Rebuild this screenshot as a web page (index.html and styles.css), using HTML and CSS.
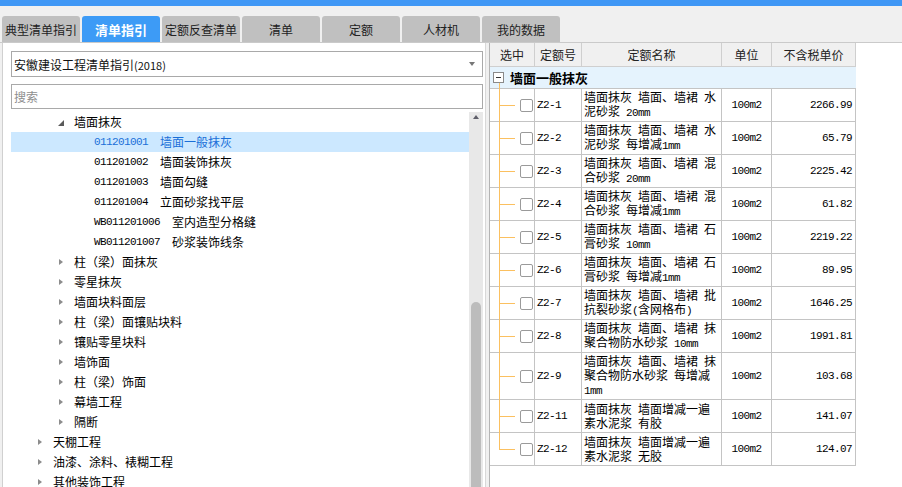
FILE: index.html
```html
<!DOCTYPE html>
<html lang="zh-CN">
<head>
<meta charset="utf-8">
<title>清单指引</title>
<link rel="stylesheet" href="styles.css">
</head>
<body>
<div class="topbar"></div>
<nav class="tabs">
  <div class="tab">典型清单指引</div>
  <div class="tab active">清单指引</div>
  <div class="tab">定额反查清单</div>
  <div class="tab">清单</div>
  <div class="tab">定额</div>
  <div class="tab">人材机</div>
  <div class="tab">我的数据</div>
</nav>
<div class="main">
  <section class="left">
    <div class="select"><span>安徽建设工程清单指引<span class="small">(2018)</span></span><i class="caret"></i></div>
    <div class="search">搜索</div>
    <div class="tree">
      <ul class="tree-list">
        <li class="node l2"><i class="tg open"></i>墙面抹灰</li>
        <li class="node l3 sel"><span class="code">011201001</span>墙面一般抹灰</li>
        <li class="node l3"><span class="code">011201002</span>墙面装饰抹灰</li>
        <li class="node l3"><span class="code">011201003</span>墙面勾缝</li>
        <li class="node l3"><span class="code">011201004</span>立面砂浆找平层</li>
        <li class="node l3"><span class="code">WB011201006</span>室内造型分格缝</li>
        <li class="node l3"><span class="code">WB011201007</span>砂浆装饰线条</li>
        <li class="node l2"><i class="tg closed"></i>柱（梁）面抹灰</li>
        <li class="node l2"><i class="tg closed"></i>零星抹灰</li>
        <li class="node l2"><i class="tg closed"></i>墙面块料面层</li>
        <li class="node l2"><i class="tg closed"></i>柱（梁）面镶贴块料</li>
        <li class="node l2"><i class="tg closed"></i>镶贴零星块料</li>
        <li class="node l2"><i class="tg closed"></i>墙饰面</li>
        <li class="node l2"><i class="tg closed"></i>柱（梁）饰面</li>
        <li class="node l2"><i class="tg closed"></i>幕墙工程</li>
        <li class="node l2"><i class="tg closed"></i>隔断</li>
        <li class="node l1"><i class="tg closed"></i>天棚工程</li>
        <li class="node l1"><i class="tg closed"></i>油漆、涂料、裱糊工程</li>
        <li class="node l1"><i class="tg closed"></i>其他装饰工程</li>
      </ul>
      <div class="vscroll"><i class="up"></i><i class="thumb"></i></div>
    </div>
  </section>
  <section class="right">
    <div class="grid">
      <div class="hd">选中</div>
      <div class="hd">定额号</div>
      <div class="hd">定额名称</div>
      <div class="hd">单位</div>
      <div class="hd">不含税单价</div>

      <div class="group"><i class="minus"></i>墙面一般抹灰</div>

      <div class="c sel-c"><i class="cb"></i></div><div class="c code-c m">Z2-1</div><div class="c name"><p>墙面抹灰&ensp;墙面、墙裙&ensp;水<br>泥砂浆&ensp;<span class="m">20mm</span></p></div><div class="c unit m">100m2</div><div class="c price m">2266.99</div>
      <div class="c sel-c"><i class="cb"></i></div><div class="c code-c m">Z2-2</div><div class="c name"><p>墙面抹灰&ensp;墙面、墙裙&ensp;水<br>泥砂浆&ensp;每增减<span class="m">1mm</span></p></div><div class="c unit m">100m2</div><div class="c price m">65.79</div>
      <div class="c sel-c"><i class="cb"></i></div><div class="c code-c m">Z2-3</div><div class="c name"><p>墙面抹灰&ensp;墙面、墙裙&ensp;混<br>合砂浆&ensp;<span class="m">20mm</span></p></div><div class="c unit m">100m2</div><div class="c price m">2225.42</div>
      <div class="c sel-c"><i class="cb"></i></div><div class="c code-c m">Z2-4</div><div class="c name"><p>墙面抹灰&ensp;墙面、墙裙&ensp;混<br>合砂浆&ensp;每增减<span class="m">1mm</span></p></div><div class="c unit m">100m2</div><div class="c price m">61.82</div>
      <div class="c sel-c"><i class="cb"></i></div><div class="c code-c m">Z2-5</div><div class="c name"><p>墙面抹灰&ensp;墙面、墙裙&ensp;石<br>膏砂浆&ensp;<span class="m">10mm</span></p></div><div class="c unit m">100m2</div><div class="c price m">2219.22</div>
      <div class="c sel-c"><i class="cb"></i></div><div class="c code-c m">Z2-6</div><div class="c name"><p>墙面抹灰&ensp;墙面、墙裙&ensp;石<br>膏砂浆&ensp;每增减<span class="m">1mm</span></p></div><div class="c unit m">100m2</div><div class="c price m">89.95</div>
      <div class="c sel-c"><i class="cb"></i></div><div class="c code-c m">Z2-7</div><div class="c name"><p>墙面抹灰&ensp;墙面、墙裙&ensp;批<br>抗裂砂浆<span class="m">(</span>含网格布<span class="m">)</span></p></div><div class="c unit m">100m2</div><div class="c price m">1646.25</div>
      <div class="c sel-c"><i class="cb"></i></div><div class="c code-c m">Z2-8</div><div class="c name"><p>墙面抹灰&ensp;墙面、墙裙&ensp;抹<br>聚合物防水砂浆&ensp;<span class="m">10mm</span></p></div><div class="c unit m">100m2</div><div class="c price m">1991.81</div>
      <div class="c sel-c tall"><i class="cb"></i></div><div class="c code-c m tall">Z2-9</div><div class="c name tall"><p>墙面抹灰&ensp;墙面、墙裙&ensp;抹<br>聚合物防水砂浆&ensp;每增减<br><span class="m">1mm</span></p></div><div class="c unit m tall">100m2</div><div class="c price m tall">103.68</div>
      <div class="c sel-c"><i class="cb"></i></div><div class="c code-c m">Z2-11</div><div class="c name"><p>墙面抹灰&ensp;墙面增减一遍<br>素水泥浆&ensp;有胶</p></div><div class="c unit m">100m2</div><div class="c price m">141.07</div>
      <div class="c sel-c last"><i class="cb"></i></div><div class="c code-c m">Z2-12</div><div class="c name"><p>墙面抹灰&ensp;墙面增减一遍<br>素水泥浆&ensp;无胶</p></div><div class="c unit m">100m2</div><div class="c price m">124.07</div>
    </div>
  </section>
</div>
</body>
</html>
```

FILE: styles.css
```css
* { box-sizing: border-box; margin: 0; padding: 0; }
html, body { width: 902px; height: 487px; overflow: hidden; }
body {
  background: #f0f0f0;
  font-family: "Noto Sans CJK SC", "Noto Sans", sans-serif;
  font-size: 12px;
  color: #000;
}
i { display: inline-block; font-style: normal; }

.topbar { height: 6px; background: #3f97f5; }

.tabs {
  display: flex;
  gap: 2px;
  height: 37px;
  padding: 10px 0 0 2px;
  border-bottom: 1px solid #cacaca;
}
.tab {
  width: 78px;
  height: 26px;
  background: #c0c0c0;
  border-radius: 3px 3px 0 0;
  display: flex;
  align-items: center;
  justify-content: center;
  color: #222;
  font-size: 12px;
}
.tab.active {
  background: #3d9bf6;
  color: #fff;
  font-weight: bold;
  font-size: 13px;
}

.main { display: flex; height: 444px; }

.left {
  margin-left: 2px;
  width: 484px;
  background: #fff;
  border-left: 1px solid #d0d0d0;
  border-right: 1px solid #d8d8d8;
  padding: 8px 0 0 8px;
  display: flex;
  flex-direction: column;
}
.select {
  width: 472px;
  height: 26px;
  border: 1px solid #a9a9a9;
  display: flex;
  align-items: center;
  justify-content: space-between;
  padding: 0 7px 0 2px;
  color: #111;
}
.small { font-size: 11px; }
.caret {
  width: 0; height: 0;
  border-left: 3.5px solid transparent;
  border-right: 3.5px solid transparent;
  border-top: 4px solid #777;
}
.search {
  margin-top: 7px;
  width: 472px;
  height: 25px;
  border: 1px solid #a9a9a9;
  color: #8e8e8e;
  padding-left: 2px;
  line-height: 23px;
}

.tree {
  margin-top: 3px;
  width: 472px;
  flex: 1;
  display: flex;
  overflow: hidden;
}
.tree-list { list-style: none; width: 458px; }
.node {
  height: 20px;
  line-height: 20px;
  display: flex;
  align-items: center;
  white-space: nowrap;
}
.node.l1 { padding-left: 26px; }
.node.l2 { padding-left: 47px; }
.node.l3 { padding-left: 83px; }
.node.sel { background: #cce8ff; color: #1a6fd8; }
.tg { width: 16px; height: 20px; display: flex; align-items: center; }
.tg.closed::before {
  content: "";
  margin-left: 1px;
  border-left: 4px solid #8c8c8c;
  border-top: 3.5px solid transparent;
  border-bottom: 3.5px solid transparent;
}
.tg.open::before {
  content: "";
  margin-top: 1px;
  border-bottom: 6px solid #5a5a5a;
  border-left: 6px solid transparent;
}
.code, .m {
  font-family: "Liberation Mono", monospace;
  font-size: 11px;
  letter-spacing: -0.6px;
}
.code { margin-right: 12px; }

.vscroll {
  width: 14px;
  background: #e8e8e8;
  display: flex;
  flex-direction: column;
  align-items: center;
}
.up {
  margin-top: 3px;
  border-left: 3px solid transparent;
  border-right: 3px solid transparent;
  border-bottom: 4px solid #5f5f6a;
}
.thumb {
  margin-top: 183px;
  width: 10px;
  flex: 1;
  background: #bcbcbc;
  border-radius: 5px 5px 0 0;
}

.right {
  margin-left: 3px;
  flex: 1;
  background: #fff;
  border-left: 1px solid #b4b4b4;
}
.grid {
  display: grid;
  grid-template-columns: 45px 47px 140px 50px 84px;
  grid-auto-rows: auto;
  width: 366px;
}
.grid > div {
  border-right: 1px solid #c4c4c4;
  border-bottom: 1px solid #c4c4c4;
}
.hd {
  height: 24px;
  background: #f0f0f0;
  display: flex;
  align-items: center;
  justify-content: center;
  color: #222;
}
.grid > .hd { border-color: #cfcfcf; }
.group {
  position: relative;
  grid-column: 1 / -1;
  height: 22px;
  background: #e5f3fd;
  display: flex;
  align-items: center;
  font-size: 13px;
  font-weight: bold;
  padding-left: 3px;
}
.group::after {
  content: "";
  position: absolute;
  left: 9px;
  top: 16px;
  bottom: -1px;
  width: 1px;
  background: #fbc060;
}
.grid > .group { border-right: none; }
.minus {
  width: 11px;
  height: 11px;
  border: 1px solid #8a8a8a;
  background: #fff;
  margin-right: 6px;
  display: flex;
  align-items: center;
  justify-content: center;
}
.minus::before { content: ""; width: 5px; height: 1px; background: #333; }

.c {
  height: 33px;
  display: flex;
  align-items: center;
  line-height: 14px;
  white-space: nowrap;
}
.c.tall { height: 47px; }
.sel-c { position: relative; }
.sel-c::before {
  content: "";
  position: absolute;
  left: 9px;
  top: 0;
  bottom: -1px;
  width: 1px;
  background: #fbc060;
}
.sel-c::after {
  content: "";
  position: absolute;
  left: 10px;
  top: 16px;
  width: 15px;
  height: 1px;
  background: #fbc060;
}
.sel-c.tall::after { top: 23px; }
.sel-c.last::before { bottom: auto; height: 17px; }
.cb {
  margin-left: 30px;
  width: 13px;
  height: 13px;
  border: 1px solid #9a9a9a;
  border-radius: 2px;
  background: #fff;
}
.code-c { padding-left: 2px; }
.name { padding-left: 2px; }
.unit { justify-content: center; }
.price { justify-content: flex-end; padding-right: 3px; }
```
